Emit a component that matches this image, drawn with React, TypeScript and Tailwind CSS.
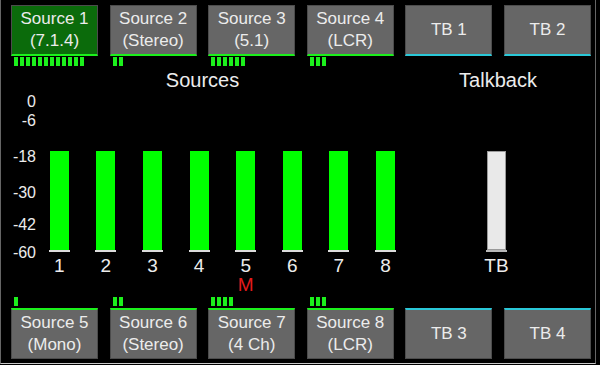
const topButtons = [
  { name: "Source 1", sub: "(7.1.4)", ticks: 12, active: true },
  { name: "Source 2", sub: "(Stereo)", ticks: 2 },
  { name: "Source 3", sub: "(5.1)", ticks: 6 },
  { name: "Source 4", sub: "(LCR)", ticks: 3 },
];

const bottomButtons = [
  { name: "Source 5", sub: "(Mono)", ticks: 1 },
  { name: "Source 6", sub: "(Stereo)", ticks: 2 },
  { name: "Source 7", sub: "(4 Ch)", ticks: 4 },
  { name: "Source 8", sub: "(LCR)", ticks: 3 },
];

const scale = [
  { label: "0", mt: "mt-0" },
  { label: "-6", mt: "mt-[3px]" },
  { label: "-18", mt: "mt-[20px]" },
  { label: "-30", mt: "mt-[20px]" },
  { label: "-42", mt: "mt-[16px]" },
  { label: "-60", mt: "mt-[12px]" },
];

const Ticks = ({ count }: { count: number }) => (
  <div className="flex gap-[2px] pl-[3px] h-[9px]">
    {Array.from({ length: count }).map((_, i) => (
      <div key={i} className="w-[4px] h-[9px] bg-[#1cf01c]" />
    ))}
  </div>
);

const SourceButton = ({
  name,
  sub,
  active,
  bottom,
}: {
  name: string;
  sub: string;
  active?: boolean;
  bottom?: boolean;
}) => (
  <div
    className={`w-[87px] h-[51px] flex flex-col items-center justify-center text-[17px] leading-[22px] text-[#ececec] border-x border-[#4c4c4c] ${
      active ? "bg-[#0b6b0b]" : "bg-[#666666]"
    } ${
      bottom
        ? "border-t-2 border-t-[#1cf01c] border-b border-b-[#4c4c4c]"
        : "border-b-2 border-b-[#1cf01c] border-t border-t-[#4c4c4c]"
    }`}
  >
    <span>{name}</span>
    <span>{sub}</span>
  </div>
);

const TbButton = ({ name, bottom }: { name: string; bottom?: boolean }) => (
  <div
    className={`w-[87px] h-[51px] flex items-center justify-center text-[17px] text-[#ececec] bg-[#666666] border-x border-[#4c4c4c] ${
      bottom
        ? "border-t-2 border-t-[#2ac8d8] border-b border-b-[#4c4c4c]"
        : "border-b-2 border-b-[#2ac8d8] border-t border-t-[#4c4c4c]"
    }`}
  >
    {name}
  </div>
);

export default function App() {
  return (
    <div
      className="w-[600px] h-[365px] bg-black overflow-hidden"
      style={{ fontFamily: '"Liberation Sans", Arial, sans-serif' }}
    >
      <div className="w-[596px] h-[364px] border-l border-r border-b border-l-[#666] border-r-[#666] border-b-[#c8c8c8] flex flex-col">
        {/* top buttons */}
        <div className="flex gap-[11.6px] pl-[10px] pt-[5px]">
          {topButtons.map((b) => (
            <div key={b.name} className="flex flex-col">
              <SourceButton name={b.name} sub={b.sub} active={b.active} />
              <div className="mt-[1px]">
                <Ticks count={b.ticks} />
              </div>
            </div>
          ))}
          <TbButton name="TB 1" />
          <TbButton name="TB 2" />
        </div>

        {/* titles */}
        <div className="flex pl-[10px] h-[28px] text-[20px] leading-[28px] text-[#ececec]">
          <div className="w-[383px] text-center">Sources</div>
          <div className="ml-[11px] w-[186px] text-center">Talkback</div>
        </div>

        {/* meters */}
        <div className="flex h-[203px]">
          <div className="w-[35px] flex flex-col items-end text-[16px] leading-[16px] text-[#ececec]">
            {scale.map((s) => (
              <div key={s.label} className={s.mt}>
                {s.label}
              </div>
            ))}
          </div>
          {Array.from({ length: 8 }).map((_, i) => (
            <div key={i} className="w-[46.6px] flex flex-col items-center">
              <div className="mt-[57px] w-[19px] h-[99px] bg-[#00ff00]" />
              <div className="w-[21px] h-[2px] bg-[#dcdcdc]" />
              <div className="mt-[4px] text-[19px] leading-[20px] text-[#ececec]">{i + 1}</div>
              {i === 4 && <div className="text-[19px] leading-[18px] text-[#e41b1b]">M</div>}
            </div>
          ))}
          <div className="w-[175.4px] flex flex-col items-center">
            <div className="mt-[57px] w-[19px] h-[99px] bg-[#e9e9e9] border border-[#9a9a9a]" />
            <div className="w-[21px] h-[2px] bg-[#b8b8b8]" />
            <div className="mt-[4px] text-[19px] leading-[20px] text-[#ececec]">TB</div>
          </div>
        </div>

        {/* bottom buttons */}
        <div className="flex gap-[11.6px] pl-[10px] items-end">
          {bottomButtons.map((b) => (
            <div key={b.name} className="flex flex-col">
              <Ticks count={b.ticks} />
              <div className="mt-[2px]">
                <SourceButton name={b.name} sub={b.sub} bottom />
              </div>
            </div>
          ))}
          <TbButton name="TB 3" bottom />
          <TbButton name="TB 4" bottom />
        </div>
      </div>
    </div>
  );
}
